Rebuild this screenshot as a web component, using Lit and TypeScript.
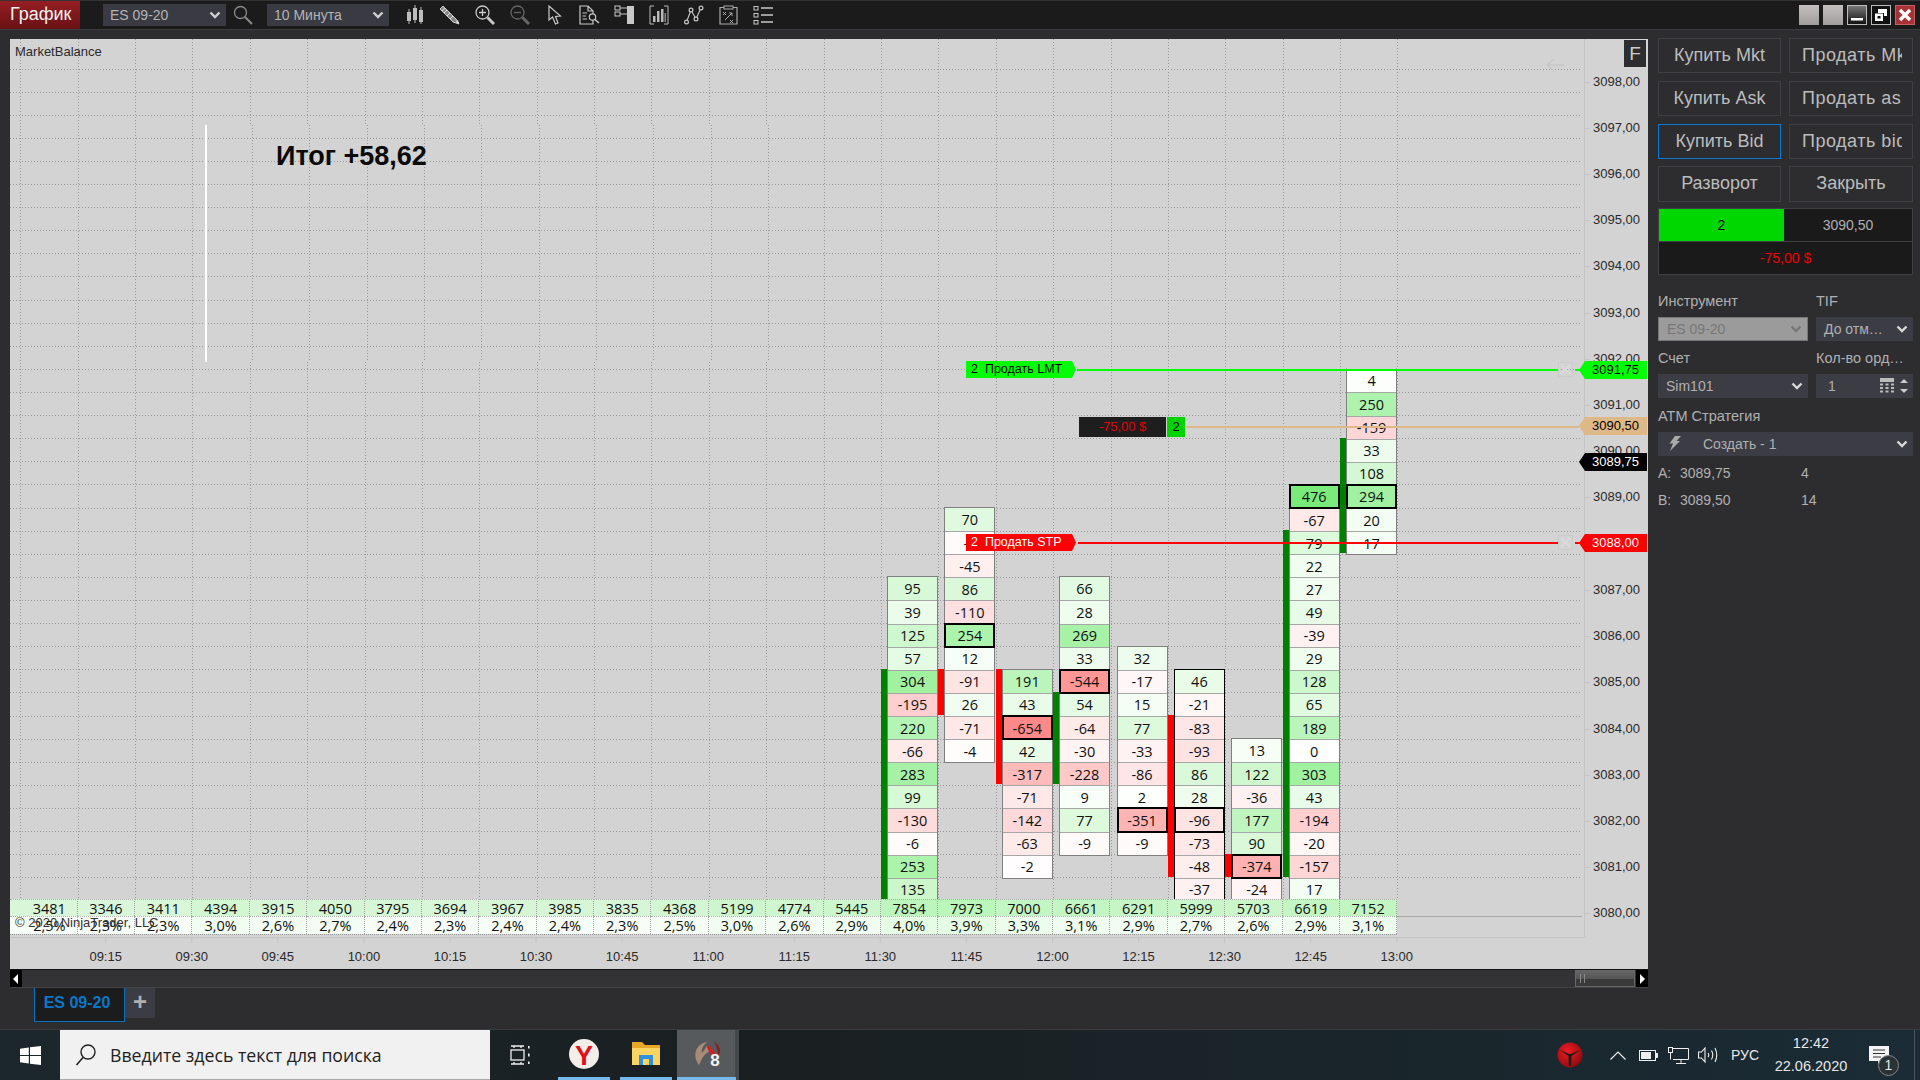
import { LitElement, css, html, svg } from 'lit';
import { customElement } from 'lit/decorators.js';

// chart geometry, in px relative to the chart pane
const ROW_H = 23.11;
const COL_W = 57.38;
const rowY = (k: number) => 29.5 + ROW_H * k;
const colX = (i: number) => 10.3 + COL_W * i;
const priceY = (p: number) => 42.5 + 46.22 * (3098 - p);

const PRICES = Array.from({ length: 19 }, (_, i) => 3098 - i);
const TIMES = ['09:15', '09:30', '09:45', '10:00', '10:15', '10:30', '10:45', '11:00', '11:15', '11:30', '11:45', '12:00', '12:15', '12:30', '12:45', '13:00'];
const VOLUMES = [3481, 3346, 3411, 4394, 3915, 4050, 3795, 3694, 3967, 3985, 3835, 4368, 5199, 4774, 5445, 7854, 7973, 7000, 6661, 6291, 5999, 5703, 6619, 7152];
const PERCENTS = ['2,5', '2,3', '2,3', '3,0', '2,6', '2,7', '2,4', '2,3', '2,4', '2,4', '2,3', '2,5', '3,0', '2,6', '2,9', '4,0', '3,9', '3,3', '3,1', '2,9', '2,7', '2,6', '2,9', '3,1'];

interface Column {
    col: number;
    top: number;
    values: number[];
    boxed: number[];
    dark?: boolean;
    open?: boolean;
    bar?: { from: number; to: number; color: string };
}

const GREEN = '#008000';
const RED = '#ff0000';

const COLUMNS: Column[] = [
    { col: 15, top: 22, values: [95, 39, 125, 57, 304, -195, 220, -66, 283, 99, -130, -6, 253, 135], boxed: [], bar: { from: 26, to: 36, color: GREEN } },
    { col: 16, top: 19, values: [70, -7, -45, 86, -110, 254, 12, -91, 26, -71, -4], boxed: [254], bar: { from: 26, to: 28, color: RED } },
    { col: 17, top: 26, values: [191, 43, -654, 42, -317, -71, -142, -63, -2], boxed: [-654], bar: { from: 26, to: 31, color: RED } },
    { col: 18, top: 22, values: [66, 28, 269, 33, -544, 54, -64, -30, -228, 9, 77, -9], boxed: [-544], bar: { from: 27, to: 31, color: GREEN } },
    { col: 19, top: 25, values: [32, -17, 15, 77, -33, -86, 2, -351, -9], boxed: [-351] },
    { col: 20, top: 26, values: [46, -21, -83, -93, 86, 28, -96, -73, -48, -37], boxed: [-96], dark: true, bar: { from: 28, to: 35, color: RED } },
    { col: 21, top: 29, values: [13, 122, -36, 177, 90, -374, -24], boxed: [-374], bar: { from: 34, to: 35, color: RED } },
    { col: 22, top: 18, values: [476, -67, 79, 22, 27, 49, -39, 29, 128, 65, 189, 0, 303, 43, -194, -20, -157, 17], boxed: [476], bar: { from: 20, to: 35, color: GREEN } },
    { col: 23, top: 13, values: [4, 250, -159, 33, 108, 294, 20, 17], boxed: [294], open: true, bar: { from: 16, to: 21, color: GREEN } },
];

function cellColor(v: number) {
    if (v >= 0) {
        const t = Math.pow(v / 476, 0.75);
        const c = Math.round(255 - 133 * t);
        return `rgb(${c},${Math.round(255 - 20 * t)},${c})`;
    }
    const c = Math.round(255 - 119 * Math.pow(-v / 654, 0.75));
    return `rgb(255,${c},${c})`;
}

function volumeColor(v: number) {
    const c = Math.round(240 - v * 0.0066);
    return `rgb(${c},246,${c})`;
}

function percentColor(p: string) {
    const c = Math.round(248 - (parseFloat(p.replace(',', '.')) - 2.3) * 12);
    return `rgb(${c},253,${c})`;
}

const chevron = svg`<svg class="chev" width="12" height="8" viewBox="0 0 12 8"><path d="M1.5 1.5 L6 6 L10.5 1.5" fill="none" stroke="currentColor" stroke-width="2.4"/></svg>`;

const TOOLBAR_ICONS = [
    svg`<svg width="20" height="20" viewBox="0 0 20 20"><g fill="#bdbdbd"><rect x="2" y="7" width="4" height="9"/><rect x="3.5" y="4" width="1" height="15"/><rect x="8" y="3" width="4" height="12"/><rect x="9.5" y="0" width="1" height="18"/><rect x="14" y="5" width="4" height="12"/><rect x="15.5" y="2" width="1" height="17"/></g></svg>`,
    svg`<svg width="22" height="20" viewBox="0 0 22 20"><path d="M1 4 L4 1 L17 14 L20 19 L14 17 Z" fill="#888" stroke="#ccc" stroke-width="1"/><path d="M3 6 L6 3 M5 8 L8 5 M8 11 L11 8 M11 14 L14 11" stroke="#ddd" stroke-width="1"/><path d="M17 17 L20 19 L19 15 Z" fill="#eee"/></svg>`,
    svg`<svg width="20" height="20" viewBox="0 0 20 20"><circle cx="7.5" cy="7.5" r="6.5" fill="none" stroke="#c8c8c8" stroke-width="1.3"/><path d="M7.5 4 V11 M4 7.5 H11" stroke="#c8c8c8" stroke-width="1.3"/><path d="M12.5 12.5 L19 19" stroke="#c8c8c8" stroke-width="3"/></svg>`,
    svg`<svg width="20" height="20" viewBox="0 0 20 20"><circle cx="7.5" cy="7.5" r="6.5" fill="none" stroke="#666" stroke-width="1.3"/><path d="M4 7.5 H11" stroke="#666" stroke-width="1.3"/><path d="M12.5 12.5 L19 19" stroke="#666" stroke-width="3"/></svg>`,
    svg`<svg width="14" height="20" viewBox="0 0 14 20"><path d="M1 1 V15 L4.5 12 L7.5 19 L10 18 L7.5 11.5 L12.5 11 Z" fill="#1c1c1c" stroke="#c8c8c8" stroke-width="1.2"/></svg>`,
    svg`<svg width="21" height="20" viewBox="0 0 21 20"><path d="M1 1 H9 L14 6 V19 H1 Z M9 1 V6 H14" fill="none" stroke="#c8c8c8" stroke-width="1.2"/><path d="M3.5 8 H8 M3.5 11 H7 M3.5 14 H8" stroke="#c8c8c8"/><circle cx="13.5" cy="12" r="3.2" fill="#1c1c1c" stroke="#c8c8c8" stroke-width="1.2"/><path d="M16 14.5 L20 18" stroke="#c8c8c8" stroke-width="1.6"/></svg>`,
    svg`<svg width="20" height="20" viewBox="0 0 20 20"><rect x="13" y="1" width="7" height="18" fill="#c8c8c8"/><rect x="1" y="1" width="5" height="4" fill="none" stroke="#c8c8c8"/><rect x="1" y="7" width="5" height="4" fill="none" stroke="#c8c8c8"/><path d="M6 3 H13 M6 9 H13" stroke="#c8c8c8"/></svg>`,
    svg`<svg width="20" height="20" viewBox="0 0 20 20"><path d="M5 1 H1 V19 H5 M15 1 H19 V19 H15" fill="none" stroke="#bbb"/><rect x="4" y="11" width="2.5" height="6" fill="#bbb"/><rect x="8" y="6" width="2.5" height="11" fill="#bbb"/><rect x="12" y="4" width="2.5" height="13" fill="#bbb"/><rect x="15.5" y="8" width="1.5" height="9" fill="#888"/></svg>`,
    svg`<svg width="20" height="20" viewBox="0 0 20 20"><path d="M2.5 17 L7 5 L12 14 L17 3" fill="none" stroke="#c8c8c8" stroke-width="1.1"/><g fill="#1c1c1c" stroke="#c8c8c8" stroke-width="1.2"><circle cx="2.5" cy="17" r="1.9"/><circle cx="7" cy="5" r="1.9"/><circle cx="12" cy="14" r="1.9"/><circle cx="17" cy="3" r="1.9"/></g></svg>`,
    svg`<svg width="19" height="20" viewBox="0 0 19 20"><path d="M5 2.5 H1 V19 H18 V2.5 H14" fill="none" stroke="#aaa" stroke-width="1.2"/><rect x="5" y="1" width="9" height="3" fill="none" stroke="#aaa"/><path d="M4 7 L7 10 M7 7 L4 10 M11 15 L14 18 M14 15 L11 18 M6 15 L13 8 M10 8 H13 V11" stroke="#aaa" fill="none"/></svg>`,
    svg`<svg width="21" height="20" viewBox="0 0 21 20"><g fill="none" stroke="#c8c8c8"><rect x="1" y="1.5" width="4" height="3.5"/><rect x="1" y="8.5" width="4" height="3.5"/><rect x="1" y="15.5" width="4" height="3.5"/></g><path d="M8 3 H20 M8 10 H20 M8 17 H20" stroke="#c8c8c8" stroke-width="1.6"/></svg>`,
];

@customElement('fp-chart')
export class FpChart extends LitElement {
    renderGrid() {
        const rows = Array.from({ length: 36 }, (_, k) => Math.round(rowY(k)) + 0.5);
        const cols = Array.from({ length: 25 }, (_, i) => Math.round(colX(i)) + 0.5);
        const vline = (x: number, y1: number, y2: number) =>
            svg`<line x1=${x} x2=${x} y1=${y1} y2=${y2} stroke="#9a9a9a" stroke-dasharray="1 2"/>`;
        return html`<svg class="grid" width="1638" height="930">
            ${rows.map((y) => svg`<line x1="0" x2="1572" y1=${y} y2=${y} stroke="#9a9a9a" stroke-dasharray="1 2"/>`)}
            ${cols.map((x, i) =>
                // the pasted note area has its verticals two pixels off
                i >= 4 && i <= 13
                    ? svg`${vline(x, 0, 86)}${vline(x + 2, 86, 323)}${vline(x, 323, 860)}`
                    : vline(x, 0, 860))}
            <line x1="1574.5" x2="1574.5" y1="0" y2="898" stroke="#c4c4c4"/>
            <line x1="0" x2="1574" y1="898.5" y2="898.5" stroke="#c4c4c4"/>
            <line x1="1387" x2="1572" y1="877.5" y2="877.5" stroke="#a8a8a8"/>
            ${PRICES.map((p) => svg`<line x1="1575" x2="1580" y1=${Math.round(priceY(p)) + 0.5} y2=${Math.round(priceY(p)) + 0.5} stroke="#c4c4c4"/>`)}
            ${TIMES.map((_, j) => svg`<line x1=${95.7 + 86.07 * j} x2=${95.7 + 86.07 * j} y1="898" y2="904" stroke="#c4c4c4"/>`)}
            <path d="M1537 26 H1554 M1537 26 L1544 20 M1537 26 L1544 32" stroke="#c6c6c6" fill="none" stroke-width="1.5"/>
        </svg>`;
    }

    renderColumn(c: Column) {
        return html`
            <div class="footprint ${c.dark ? 'dark' : ''} ${c.open ? 'open' : ''}"
                style="left:${colX(c.col) + 6}px;top:${rowY(c.top) - 0.6}px">
                ${c.values.map((v) => html`<div class="cell ${c.boxed.includes(v) ? 'boxed' : ''}" style="background:${cellColor(v)}">${v}</div>`)}
            </div>
            ${c.bar
                ? html`<div class="bar" style="left:${colX(c.col)}px;top:${rowY(c.bar.from) - 0.6}px;height:${(c.bar.to - c.bar.from) * ROW_H}px;background:${c.bar.color}"></div>`
                : null}
        `;
    }

    renderOrderLine(y: number, color: string, startX: number, withClose: boolean) {
        return html`
            <div class="oline" style="top:${y}px;left:${startX}px;width:${(withClose ? 1548 : 1569) - startX}px;background:${color}"></div>
            ${withClose
                ? html`<div class="oline" style="top:${y}px;left:1565px;width:5px;background:${color}"></div>
                    <svg class="closebox" style="top:${y - 7}px" width="15" height="15" viewBox="0 0 15 15"><rect x=".5" y=".5" width="14" height="14" fill="none" stroke="#cbcbcb"/><path d="M3 3 L12 12 M12 3 L3 12" stroke="#dadada" stroke-width="2.2"/></svg>`
                : null}
        `;
    }

    render() {
        return html`
            ${this.renderGrid()}
            <div class="title">MarketBalance</div>
            <div class="paste-line"></div>
            <div class="total">Итог +58,62</div>
            <div class="f-btn">F</div>

            ${COLUMNS.map((c) => this.renderColumn(c))}

            <div class="table">
                <div class="trow vol">${VOLUMES.map((v, i) => html`<div class="tc ${i === 0 ? 'first' : ''}" style="background:${volumeColor(v)}">${v}</div>`)}</div>
                <div class="trow pct">${PERCENTS.map((p, i) => html`<div class="tc ${i === 0 ? 'first' : ''}" style="background:${percentColor(p)}">${p}%</div>`)}</div>
            </div>
            <div class="copy">© 2020 NinjaTrader, LLC</div>

            ${PRICES.map((p) => html`<div class="price" style="top:${priceY(p) - 8}px">${p},00</div>`)}
            ${TIMES.map((t, j) => html`<div class="time" style="left:${95.7 + 86.07 * j - 25}px">${t}</div>`)}

            ${this.renderOrderLine(330, '#00ff00', 1067, true)}
            ${this.renderOrderLine(387, '#deb887', 1176, false)}
            ${this.renderOrderLine(503, '#ff0000', 1068, true)}

            <div class="olabel lmt" style="top:322px">2&nbsp; Продать LMT</div>
            <div class="olabel stp" style="top:495px">2&nbsp; Продать STP</div>
            <div class="pnl"><span class="pnl-val">-75,00 $</span><span class="pnl-qty">2</span></div>

            <div class="flag" style="top:322px;background:#00ff00;color:#000">3091,75</div>
            <div class="flag" style="top:378px;background:#deb887;color:#000">3090,50</div>
            <div class="flag" style="top:414px;background:#000;color:#fff">3089,75</div>
            <div class="flag" style="top:495px;background:#ff0000;color:#fff">3088,00</div>
        `;
    }

    static styles = css`
        :host {
            display: block;
            position: relative;
            width: 1638px;
            height: 930px;
            background: #d3d3d3;
            overflow: hidden;
            font-family: "Liberation Sans", Arial, sans-serif;
            font-size: 13px;
            color: #2a2a2a;
        }

        .grid {
            position: absolute;
            top: 0;
            left: 0;
        }

        .title {
            position: absolute;
            left: 5px;
            top: 5px;
            line-height: 16px;
        }

        .paste-line {
            position: absolute;
            left: 195px;
            top: 86px;
            width: 2px;
            height: 237px;
            background: #fff;
        }

        .total {
            position: absolute;
            left: 266px;
            top: 100px;
            font-size: 27px;
            font-weight: bold;
            line-height: 34px;
            color: #0a0a0a;
        }

        .f-btn {
            position: absolute;
            left: 1614px;
            top: 1px;
            width: 22px;
            height: 27px;
            background: #2d2d30;
            color: #ccc;
            font-size: 19px;
            line-height: 27px;
            text-align: center;
        }

        .footprint {
            position: absolute;
            width: 51px;
            box-sizing: border-box;
            border: 1px solid #808080;
        }
        .footprint.dark {
            border-color: #000;
        }
        .footprint.open {
            border-top-color: transparent;
        }
        .cell {
            box-sizing: border-box;
            height: 23.11px;
            border-top: 1px solid #a6a6a6;
            display: flex;
            align-items: center;
            justify-content: center;
            font-family: "Open Sans", sans-serif;
            font-size: 14.5px;
            color: #111;
        }
        .cell:first-child {
            border-top: none;
        }
        .cell.boxed {
            outline: 2px solid #000;
            outline-offset: -1px;
            position: relative;
        }

        .bar {
            position: absolute;
            width: 6px;
        }

        .table {
            position: absolute;
            left: 0;
            top: 860px;
        }
        .trow {
            display: flex;
        }
        .trow.vol {
            height: 17px;
        }
        .trow.pct {
            height: 18px;
            border-bottom: 1px dotted #999;
        }
        .tc {
            box-sizing: border-box;
            width: 57.38px;
            border-right: 1px dotted #a0a0a0;
            border-top: 1px dotted #b0b0b0;
            text-align: center;
            font-family: "Open Sans", sans-serif;
            font-size: 14.5px;
            line-height: 17px;
            color: #111;
        }
        .tc.first {
            width: 67.68px;
            padding-left: 12px;
        }

        .copy {
            position: absolute;
            left: 5px;
            top: 876px;
            line-height: 16px;
            color: #333;
        }

        .price {
            position: absolute;
            right: 8px;
            line-height: 16px;
        }

        .time {
            position: absolute;
            top: 910px;
            width: 50px;
            text-align: center;
            line-height: 16px;
        }

        .oline {
            position: absolute;
            height: 2px;
        }

        .closebox {
            position: absolute;
            left: 1548px;
        }

        .olabel {
            position: absolute;
            left: 956px;
            width: 110px;
            height: 17px;
            padding-left: 5px;
            box-sizing: border-box;
            font-size: 12.5px;
            line-height: 17px;
            white-space: nowrap;
            clip-path: polygon(0 0, 106px 0, 100% 50%, 106px 100%, 0 100%);
        }
        .olabel.lmt {
            background: #00ff00;
            color: #000;
        }
        .olabel.stp {
            background: #ff0000;
            color: #fff;
        }

        .pnl {
            position: absolute;
            left: 1069px;
            top: 378px;
            display: flex;
            gap: 1px;
            height: 20px;
            line-height: 20px;
            text-align: center;
        }
        .pnl-val {
            width: 87px;
            background: #1e1e1e;
            color: #e00000;
        }
        .pnl-qty {
            width: 18px;
            background: #00d400;
            color: #000;
        }

        .flag {
            position: absolute;
            left: 1569px;
            width: 68px;
            height: 18px;
            box-sizing: border-box;
            padding-left: 13px;
            line-height: 18px;
            clip-path: polygon(0 50%, 6px 0, 100% 0, 100% 100%, 6px 100%);
        }
    `;
}

@customElement('order-panel')
export class OrderPanel extends LitElement {
    renderSelect(text: string, cls = '') {
        return html`<div class="select ${cls}"><span>${text}</span>${chevron}</div>`;
    }

    render() {
        return html`
            <div class="buttons">
                <div class="btn">Купить Mkt</div>
                <div class="btn clip"><span>Продать Mkt</span></div>
                <div class="btn">Купить Ask</div>
                <div class="btn clip"><span>Продать ask</span></div>
                <div class="btn focus">Купить Bid</div>
                <div class="btn clip"><span>Продать bid</span></div>
                <div class="btn short">Разворот</div>
                <div class="btn short">Закрыть</div>
            </div>

            <div class="position">
                <div class="pos-row">
                    <div class="qty">2</div>
                    <div class="avg">3090,50</div>
                </div>
                <div class="pl">-75,00 $</div>
            </div>

            <div class="form">
                <div class="label">Инструмент</div>
                <div class="label">TIF</div>
                ${this.renderSelect('ES 09-20', 'disabled')}
                ${this.renderSelect('До отм…')}
                <div class="label">Счет</div>
                <div class="label">Кол-во орд…</div>
                ${this.renderSelect('Sim101')}
                <div class="select qty-input">
                    <span>1</span>
                    <span class="qty-tools">
                        <svg width="14" height="16" viewBox="0 0 14 16"><rect x="0" y="0" width="14" height="4" fill="#bbb"/><g fill="#bbb"><rect x="0" y="5.5" width="3" height="2"/><rect x="5.5" y="5.5" width="3" height="2"/><rect x="11" y="5.5" width="3" height="2"/><rect x="0" y="9" width="3" height="2"/><rect x="5.5" y="9" width="3" height="2"/><rect x="11" y="9" width="3" height="2"/><rect x="0" y="12.5" width="3" height="2"/><rect x="5.5" y="12.5" width="3" height="2"/><rect x="11" y="12.5" width="3" height="2"/></g></svg>
                        <svg width="10" height="16" viewBox="0 0 10 16"><path d="M1 5 L5 1 L9 5 Z M1 11 L5 15 L9 11 Z" fill="#ccc"/></svg>
                    </span>
                </div>
                <div class="label wide">ATM Стратегия</div>
                <div class="select atm">
                    <svg width="14" height="16" viewBox="0 0 14 16"><path d="M7 0 H13 L8.5 5 H12 L2 15 L5 7.5 H1.5 Z" fill="#aaa"/></svg>
                    <span>Создать - 1</span>
                    ${chevron}
                </div>
            </div>

            <div class="quotes">
                <span>A:</span><span>3089,75</span><span>4</span>
                <span>B:</span><span>3089,50</span><span>14</span>
            </div>
        `;
    }

    static styles = css`
        :host {
            display: block;
            box-sizing: border-box;
            width: 272px;
            padding: 0 7px 0 10px;
            margin-top: -1px;
            font-family: "Liberation Sans", Arial, sans-serif;
            font-size: 14px;
            color: #b0b0b0;
        }

        .buttons {
            display: grid;
            grid-template-columns: 123px 124px;
            grid-auto-rows: 35px;
            column-gap: 8px;
            row-gap: 8px;
        }
        .btn {
            box-sizing: border-box;
            border: 1px solid #3f3f44;
            font-size: 18px;
            line-height: 33px;
            text-align: center;
            white-space: nowrap;
            color: #bcbcbc;
        }
        .btn.focus {
            border-color: #0a78d2;
        }
        .btn.short {
            margin-top: -1px;
        }
        .btn.clip {
            padding: 0 10px 0 12px;
            text-align: left;
        }
        .btn.clip span {
            display: block;
            overflow: hidden;
            letter-spacing: 0.5px;
        }

        .position {
            margin-top: 6px;
            height: 67px;
            box-sizing: border-box;
            border: 1px solid #3f3f44;
            background: #1a1a1a;
        }
        .pos-row {
            display: flex;
            height: 32px;
            border-bottom: 1px solid #3f3f44;
            line-height: 32px;
            text-align: center;
        }
        .qty {
            width: 125px;
            background: #00d600;
            color: #000;
        }
        .avg {
            flex: 1;
        }
        .pl {
            line-height: 32px;
            text-align: center;
            color: #f00000;
        }

        .form {
            display: grid;
            grid-template-columns: 150px 97px;
            grid-template-rows: 18px 24px 19px 24px 20px 24px;
            column-gap: 8px;
            row-gap: 7px;
            margin-top: 17px;
        }
        .label {
            align-self: end;
            line-height: 18px;
            font-size: 14.5px;
            white-space: nowrap;
        }
        .label.wide {
            grid-column: 1 / 3;
        }
        .select {
            display: flex;
            align-items: center;
            justify-content: space-between;
            box-sizing: border-box;
            padding: 0 5px 0 8px;
            background: #3c3c44;
            color: #b0b0b0;
            white-space: nowrap;
        }
        .select .chev {
            color: #d8d8d8;
        }
        .select.disabled {
            background: #9b9b9b;
            border: 1px solid #777;
            color: #777;
        }
        .select.disabled .chev {
            color: #777;
        }
        .qty-input {
            padding-left: 12px;
            padding-right: 4px;
        }
        .qty-tools {
            display: flex;
            gap: 5px;
        }
        .atm {
            grid-column: 1 / 3;
            padding-left: 10px;
            justify-content: flex-start;
        }
        .atm span {
            margin-left: 21px;
        }
        .atm .chev {
            margin-left: auto;
        }

        .quotes {
            display: grid;
            grid-template-columns: 22px 121px 1fr;
            grid-auto-rows: 18px;
            row-gap: 9px;
            margin-top: 8px;
            line-height: 18px;
        }
    `;
}

@customElement('win-taskbar')
export class WinTaskbar extends LitElement {
    render() {
        return html`
            <div class="start">
                <svg width="21" height="19" viewBox="0 0 21 19"><path d="M0 2.8 L8.8 1.5 V9 H0 Z M10 1.3 L21 0 V9 H10 Z M0 10 H8.8 V17.5 L0 16.2 Z M10 10 H21 V19 L10 17.7 Z" fill="#fff"/></svg>
            </div>
            <div class="search">
                <svg width="22" height="24" viewBox="0 0 22 24"><circle cx="13" cy="9" r="7" fill="none" stroke="#222" stroke-width="1.4"/><path d="M8 14.5 L1.5 22" stroke="#222" stroke-width="1.6"/></svg>
                <span>Введите здесь текст для поиска</span>
            </div>
            <div class="item taskview">
                <svg width="20" height="20" viewBox="0 0 20 20"><g fill="none" stroke="#eee" stroke-width="1.3"><rect x="1" y="5" width="13" height="10"/><path d="M1 1 H14 M1 19 H14 M4 1 V3 M11 1 V3 M4 17 V19 M11 17 V19"/></g><rect x="18" y="1" width="1.6" height="2.5" fill="#eee"/><rect x="18" y="8.5" width="1.6" height="3" fill="#eee"/><rect x="18" y="16.5" width="1.6" height="2.5" fill="#eee"/></svg>
            </div>
            <div class="item running first">
                <svg width="30" height="30" viewBox="0 0 30 30"><circle cx="15" cy="15" r="15" fill="#f2efe9"/><text x="15" y="26" text-anchor="middle" font-family="Liberation Sans" font-weight="bold" font-size="27" fill="#e0101a">Y</text></svg>
            </div>
            <div class="item running">
                <svg width="28" height="23" viewBox="0 0 28 23"><path d="M0 0 H10 L13 3 H28 V23 H0 Z" fill="#e8a827"/><path d="M0 6 H28 V23 H0 Z" fill="#fcd462"/><rect x="7" y="13" width="14" height="10" fill="#2f8fe0"/><rect x="11" y="17" width="6" height="6" fill="#fcd462"/></svg>
            </div>
            <div class="item running active">
                <svg width="30" height="27" viewBox="0 0 30 27"><path d="M6 25 C-2 15 4 3 14 2 C10 6 8 9 9 13 L14 6 L16 12 C12 13 9 18 6 25 Z" fill="#a98a76"/><path d="M16 5 L23 14 L18 20 C19 14 16 10 14 8 Z" fill="#cf2025"/><path d="M21 2 C27 5 29 12 25 16 C25 10 24 6 21 2 Z" fill="#8f1a1e"/><text x="22" y="26" text-anchor="middle" font-family="Liberation Sans" font-weight="bold" font-size="17" fill="#f4f4f4">8</text></svg>
            </div>

            <div class="tray">
                <div class="t redicon">
                    <svg width="26" height="26" viewBox="0 0 26 26"><defs><radialGradient id="rg" cx=".4" cy=".35" r=".7"><stop offset="0" stop-color="#f01c22"/><stop offset="1" stop-color="#8a0a0e"/></radialGradient></defs><circle cx="13" cy="13" r="12.5" fill="url(#rg)"/><path d="M3 8 L12 12 H14 L23 8 L14.5 14 L14 24 H12 L11.5 14 Z" fill="#1a1a1a"/></svg>
                </div>
                <div class="t chevron-up"><svg width="16" height="9" viewBox="0 0 16 9"><path d="M.5 8.5 L8 1 L15.5 8.5" fill="none" stroke="#eee" stroke-width="1.2"/></svg></div>
                <div class="t w30"><svg width="19" height="11" viewBox="0 0 19 11"><rect x=".5" y=".5" width="16" height="10" fill="none" stroke="#eee"/><rect x="2" y="2" width="10" height="7" fill="#eee"/><rect x="17" y="3" width="2" height="5" fill="#eee"/></svg></div>
                <div class="t w30"><svg width="21" height="17" viewBox="0 0 21 17"><g fill="none" stroke="#eee"><path d="M5 1.5 H20.5 V12.5 H5"/><path d="M13 12.5 V16 M8 16.5 H18"/><rect x=".5" y=".5" width="4" height="5"/><path d="M2.5 5.5 V12.5"/></g></svg></div>
                <div class="t w30"><svg width="21" height="16" viewBox="0 0 21 16"><g fill="none" stroke="#eee" stroke-width="1.1"><path d="M.5 5 H3.5 L7 1 V15 L3.5 11 H.5 Z"/><path d="M10 6 Q11.5 8 10 10 M13.5 3.5 Q16 8 13.5 12.5 M17 1 Q20.5 8 17 15"/></g></svg></div>
                <div class="t lang">РУС</div>
                <div class="t clock"><div>12:42</div><div>22.06.2020</div></div>
                <div class="t notif">
                    <svg width="20" height="18" viewBox="0 0 20 18"><path d="M0 0 H20 V15 H12 L9 18 V15 H0 Z" fill="#f4f4f4"/><path d="M4 4 H16 M4 7.5 H16 M4 11 H12" stroke="#333" stroke-width="1.2"/></svg>
                    <span class="badge">1</span>
                </div>
                <div class="show-desktop"></div>
            </div>
        `;
    }

    static styles = css`
        :host {
            display: flex;
            height: 50px;
            background: linear-gradient(90deg, #1c272c 0%, #1a1f21 40%, #19262c 75%, #1b2c36 100%);
            font-family: "Liberation Sans", Arial, sans-serif;
            color: #e8e8e8;
        }

        .start {
            width: 60px;
            display: flex;
            align-items: center;
            justify-content: center;
        }

        .search {
            box-sizing: border-box;
            width: 430px;
            padding-left: 15px;
            display: flex;
            align-items: center;
            gap: 13px;
            background: #f1f1f1;
            border-bottom: 1px solid #aaa;
            color: #222;
            font-family: "Open Sans", sans-serif;
            font-size: 17.7px;
            white-space: nowrap;
        }

        .item {
            box-sizing: border-box;
            width: 62px;
            display: flex;
            align-items: center;
            justify-content: center;
        }
        .item.taskview {
            width: 60px;
        }
        .item.first {
            margin-left: 3px;
        }
        .item.running {
            border-bottom: 3px solid transparent;
            border-image: linear-gradient(90deg, transparent 9%, #76b9ed 9%, #76b9ed 91%, transparent 91%) 1;
        }
        .item.active {
            background: linear-gradient(90deg, #565a5c 93%, #45494b 93%);
            border-image: linear-gradient(90deg, #76b9ed 93%, transparent 93%) 1;
        }

        .tray {
            margin-left: auto;
            display: flex;
            align-items: stretch;
        }
        .t {
            display: flex;
            align-items: center;
            justify-content: center;
        }
        .redicon {
            width: 40px;
        }
        .chevron-up {
            width: 24px;
            margin-left: 16px;
            margin-right: 3px;
        }
        .w30 {
            width: 30px;
        }
        .lang {
            width: 44px;
            font-size: 14px;
        }
        .clock {
            width: 88px;
            flex-direction: column;
            gap: 6px;
            font-size: 14.5px;
            line-height: 17px;
        }
        .notif {
            position: relative;
            width: 59px;
            padding-right: 12px;
            box-sizing: border-box;
        }
        .badge {
            position: absolute;
            left: 23px;
            top: 25px;
            width: 19px;
            height: 19px;
            border: 1px solid #888;
            border-radius: 50%;
            background: #2a3236;
            font-size: 14px;
            line-height: 19px;
            text-align: center;
        }
        .show-desktop {
            width: 5px;
            border-left: 1px solid #4a5358;
        }
    `;
}

@customElement('app-root')
export class AppRoot extends LitElement {
    render() {
        return html`
            <div class="window">
                <div class="titlebar">
                    <div class="tab-name">График</div>
                    <div class="dd instrument"><span>ES 09-20</span>${chevron}</div>
                    <svg class="find" width="20" height="20" viewBox="0 0 20 20"><circle cx="7.5" cy="7.5" r="6" fill="none" stroke="#8a8a8a" stroke-width="1.3"/><path d="M12 12 L19 19" stroke="#8a8a8a" stroke-width="2"/></svg>
                    <div class="dd interval"><span>10 Минута</span>${chevron}</div>
                    <div class="tools">${TOOLBAR_ICONS.map((icon) => html`<span class="tool">${icon}</span>`)}</div>
                    <div class="winbtns">
                        <span class="wb plain"></span>
                        <span class="wb plain"></span>
                        <span class="wb dark"><svg width="14" height="14" viewBox="0 0 14 14"><rect x="1" y="10" width="12" height="2.5" fill="#fff"/></svg></span>
                        <span class="wb black"><svg width="14" height="14" viewBox="0 0 14 14"><path d="M4 1 H13 V8 H10 V5 H4 Z M1 5.5 H9 V13 H1 Z M3.5 8 V10.5 H6.5 V8 Z" fill="#fff" fill-rule="evenodd"/></svg></span>
                        <span class="wb close"><svg width="14" height="14" viewBox="0 0 14 14"><path d="M2 2 L12 12 M12 2 L2 12" stroke="#fff" stroke-width="3.4"/></svg></span>
                    </div>
                </div>

                <div class="work">
                    <div class="chart-side">
                        <fp-chart></fp-chart>
                        <div class="scroll">
                            <span class="sarrow"><svg width="6" height="10" viewBox="0 0 6 10"><path d="M5 0 V10 L0 5 Z" fill="#fff"/></svg></span>
                            <span class="thumb"><i></i><i></i></span>
                            <span class="sarrow"><svg width="6" height="10" viewBox="0 0 6 10"><path d="M1 0 V10 L6 5 Z" fill="#fff"/></svg></span>
                        </div>
                        <div class="tabs">
                            <div class="tab">ES 09-20</div>
                            <div class="plus">+</div>
                        </div>
                    </div>
                    <order-panel></order-panel>
                </div>
            </div>
            <win-taskbar></win-taskbar>
        `;
    }

    static styles = css`
        :host {
            display: block;
            width: 1920px;
            height: 1080px;
            overflow: hidden;
            font-family: "Liberation Sans", Arial, sans-serif;
        }

        .window {
            height: 1030px;
            box-sizing: border-box;
            background: #2d2d30;
            border-bottom: 1px solid #3c3c40;
        }

        .titlebar {
            display: flex;
            align-items: center;
            height: 30px;
            box-sizing: border-box;
            background: #1b1b1b;
            border-bottom: 1px solid #3c3c40;
            border-top: 1px solid #333;
        }
        .tab-name {
            width: 80px;
            height: 28px;
            box-sizing: border-box;
            padding-left: 10px;
            background: linear-gradient(180deg, #951e22, #6a1014);
            color: #f2f2f2;
            font-size: 18px;
            line-height: 26px;
        }
        .dd {
            display: flex;
            align-items: center;
            justify-content: space-between;
            box-sizing: border-box;
            height: 22px;
            padding: 0 5px 0 7px;
            background: #3a3a42;
            color: #b4b4b4;
            font-size: 14px;
        }
        .dd .chev {
            color: #d0d0d0;
        }
        .instrument {
            width: 123px;
            margin-left: 23px;
        }
        .find {
            margin-left: 7px;
            margin-right: 14px;
        }
        .interval {
            width: 122px;
        }
        .tools {
            display: flex;
            margin-left: 9px;
        }
        .tool {
            display: flex;
            justify-content: center;
            width: 34.8px;
        }
        .winbtns {
            display: flex;
            gap: 4px;
            margin-left: auto;
            margin-right: 5px;
        }
        .wb {
            display: flex;
            align-items: center;
            justify-content: center;
            box-sizing: border-box;
            width: 20px;
            height: 20px;
        }
        .wb.plain {
            background: linear-gradient(180deg, #c4c0c0, #a09c9c);
        }
        .wb.dark {
            background: linear-gradient(180deg, #777, #111);
            border: 1px solid #bbb;
        }
        .wb.black {
            background: #111;
            border: 1px solid #bbb;
        }
        .wb.close {
            background: #a83236;
            border: 1px solid #c06060;
        }

        .work {
            display: flex;
            padding: 9px 0 0 10px;
        }
        .chart-side {
            width: 1638px;
        }

        .scroll {
            display: flex;
            justify-content: space-between;
            align-items: stretch;
            box-sizing: border-box;
            height: 19px;
            background: #333336;
            border-top: 1px solid #111;
            border-bottom: 1px solid #444;
        }
        .sarrow {
            display: flex;
            align-items: center;
            justify-content: center;
            width: 12px;
            background: #000;
        }
        .thumb {
            margin-left: auto;
            margin-right: 1px;
            width: 60px;
            box-sizing: border-box;
            display: flex;
            gap: 3px;
            padding: 3px 0 3px 4px;
            background: linear-gradient(180deg, #666 0%, #555 50%, #3a3a3a 51%, #3a3a3a 100%);
            border: 1px solid #666;
        }
        .thumb i {
            width: 1px;
            background: #888;
        }

        .tabs {
            display: flex;
            align-items: flex-start;
            margin-left: 24px;
        }
        .tab {
            box-sizing: border-box;
            width: 91px;
            height: 34px;
            padding-right: 5px;
            background: #1c1c1c;
            border: 1px solid #0a70c0;
            border-top: none;
            color: #0a78c8;
            font-size: 16px;
            font-weight: bold;
            line-height: 30px;
            text-align: center;
        }
        .plus {
            width: 30px;
            height: 30px;
            background: #3c3c44;
            color: #b0b0b0;
            font-size: 24px;
            font-weight: bold;
            line-height: 28px;
            text-align: center;
        }
    `;
}
